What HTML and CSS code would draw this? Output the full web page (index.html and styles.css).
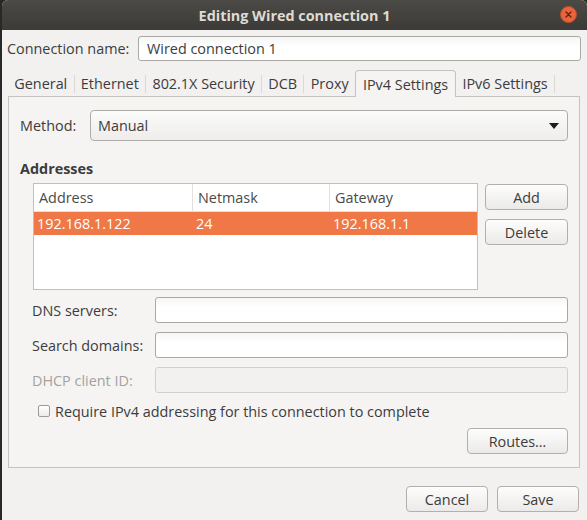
FILE: index.html
```html
<!DOCTYPE html>
<html>
<head>
<meta charset="utf-8">
<title>Editing Wired connection 1</title>
<link rel="stylesheet" href="styles.css">
</head>
<body>
<div class="window">
  <div class="titlebar">
    <span class="title">Editing Wired connection 1</span>
    <span class="close"><svg width="17" height="17" viewBox="0 0 17 17"><circle cx="8.5" cy="8.5" r="8" fill="#e9643a" stroke="#c24a22" stroke-width="1"/><path d="M6 6 L11 11 M11 6 L6 11" stroke="#5a2410" stroke-width="1.3" stroke-linecap="round"/></svg></span>
  </div>
  <div class="content">
    <div class="namerow">
      <span class="namelabel">Connection name:</span>
      <div class="entry nameentry">Wired connection 1</div>
    </div>
    <div class="tabs">
      <span class="tab">General</span><span class="tsep"></span>
      <span class="tab">Ethernet</span><span class="tsep"></span>
      <span class="tab">802.1X Security</span><span class="tsep"></span>
      <span class="tab">DCB</span><span class="tsep"></span>
      <span class="tab">Proxy</span>
      <span class="tab active">IPv4 Settings</span>
      <span class="tab">IPv6 Settings</span><span class="tsep"></span>
    </div>
    <div class="panel">
      <div class="methodrow">
        <span class="methodlabel">Method:</span>
        <div class="combo"><span>Manual</span><svg width="10" height="6" viewBox="0 0 10 6"><path d="M0 0 L10 0 L5 6 Z" fill="#1e1e1e"/></svg></div>
      </div>
      <div class="section-title">Addresses</div>
      <div class="addr">
        <div class="tree">
          <div class="thead">
            <div class="hc c1">Address</div>
            <div class="hc c2">Netmask</div>
            <div class="hc c3">Gateway</div>
          </div>
          <div class="trow selected">
            <div class="rc c1">192.168.1.122</div>
            <div class="rc c2">24</div>
            <div class="rc c3">192.168.1.1</div>
          </div>
        </div>
        <div class="addrbtns">
          <div class="button">Add</div>
          <div class="button">Delete</div>
        </div>
      </div>
      <div class="form">
        <span class="flabel">DNS servers:</span><div class="entry"></div>
        <span class="flabel">Search domains:</span><div class="entry"></div>
        <span class="flabel disabled">DHCP client ID:</span><div class="entry disabled"></div>
      </div>
      <div class="checkrow">
        <span class="checkbox"></span>
        <span>Require IPv4 addressing for this connection to complete</span>
      </div>
      <div class="routesrow">
        <div class="button routes">Routes…</div>
      </div>
    </div>
    <div class="footer">
      <div class="button fbtn">Cancel</div>
      <div class="button fbtn">Save</div>
    </div>
  </div>
</div>
</body>
</html>
```
FILE: styles.css
```css
* { box-sizing: border-box; }
html, body { margin: 0; padding: 0; }
body {
  background: #2a2826;
  font-family: "Open Sans", "Noto Sans", sans-serif;
  font-size: 14.4px;
  color: #3c3c3c;
  width: 587px;
  height: 520px;
  overflow: hidden;
}
.window {
  margin-left: 2px;
  width: 585px;
  height: 520px;
  background: #f2f1f0;
  border-radius: 6px 6px 0 0;
  overflow: hidden;
  display: flex;
  flex-direction: column;
}
.titlebar {
  height: 30px;
  flex: none;
  background: linear-gradient(#4b4a46, #3c3b37);
  display: flex;
  align-items: center;
  justify-content: center;
  position: relative;
}
.title {
  color: #dfdbd2;
  font-weight: bold;
  font-size: 14.4px;
}
.close {
  position: absolute;
  right: 10px;
  top: 6px;
  width: 17px;
  height: 17px;
  display: flex;
}
.content {
  padding: 6px 6px 0 5px;
  display: flex;
  flex-direction: column;
}
.namerow {
  display: flex;
  align-items: center;
  height: 25px;
}
.namelabel { width: 131px; flex: none; }
.entry {
  height: 26px;
  border: 1px solid #aaa8a3;
  border-radius: 3px;
  background: linear-gradient(#f6f6f6, #ffffff 40%);
  padding-left: 8px;
  display: flex;
  align-items: center;
}
.entry.disabled {
  border-color: #d3d0cb;
  background: #f2f1f0;
}
.nameentry { flex: 1; height: 25px; }
.tabs {
  margin-top: 9px;
  margin-left: 1px;
  height: 26px;
  display: flex;
  align-items: stretch;
}
.tab {
  padding: 0 6.3px;
  display: flex;
  align-items: center;
}
.tsep {
  width: 1px;
  background: #dcd9d4;
  margin: 5px 0 3px;
}
.tab.active {
  background: #f5f4f3;
  border: 1px solid #c6c3be;
  border-bottom: none;
  border-radius: 4px 4px 0 0;
  margin-bottom: -1px;
  position: relative;
  z-index: 1;
  padding: 0 7px;
}
.panel {
  margin: 0 1px;
  border: 1px solid #c6c3be;
  background: #f5f4f3;
  padding: 13px 11px 13px 11px;
  display: flex;
  flex-direction: column;
}
.methodrow {
  display: flex;
  align-items: center;
  height: 31px;
}
.methodlabel { width: 70px; flex: none; }
.combo {
  flex: 1;
  height: 31px;
  border: 1px solid #aeaca7;
  border-radius: 4px;
  background: linear-gradient(#fbfbfa, #eeedeb);
  display: flex;
  align-items: center;
  justify-content: space-between;
  padding: 0 8px 0 7px;
}
.section-title {
  font-weight: bold;
  margin-top: 18px;
  height: 19px;
  line-height: 19px;
}
.addr {
  margin-top: 5px;
  display: flex;
  padding-left: 13px;
}
.tree {
  width: 445px;
  height: 107px;
  border: 1px solid #c3c0bb;
  background: #ffffff;
}
.thead {
  display: flex;
  height: 28px;
  border-bottom: 1px solid #e2e1df;
}
.hc {
  display: flex;
  align-items: center;
  padding-left: 5px;
  color: #4a4a4a;
}
.hc.c1, .hc.c2 { border-right: 1px solid #e2e1df; }
.c1 { width: 159px; }
.c2 { width: 137px; }
.c3 { flex: 1; }
.trow {
  display: flex;
  height: 23px;
}
.trow.selected {
  background: #f07746;
  color: #ffffff;
}
.rc {
  display: flex;
  align-items: center;
  padding-left: 3px;
}
.addrbtns {
  margin-left: 7px;
  padding-top: 1px;
  display: flex;
  flex-direction: column;
  gap: 9px;
}
.button {
  height: 26px;
  border: 1px solid #b3b0aa;
  border-radius: 4px;
  background: linear-gradient(#fdfdfd, #ebeae8);
  display: flex;
  align-items: center;
  justify-content: center;
  color: #3c3c3c;
}
.addrbtns .button { width: 83px; }
.form {
  margin-top: 7px;
  padding-left: 12px;
  display: grid;
  grid-template-columns: 123px 1fr;
  row-gap: 9px;
  align-items: center;
}
.flabel.disabled { color: #a3a29e; }
.checkrow {
  margin-top: 9px;
  height: 18px;
  padding-left: 18px;
  display: flex;
  align-items: center;
  gap: 5px;
}
.checkbox {
  width: 12px;
  height: 12px;
  border: 1px solid #9d9b97;
  border-radius: 2px;
  background: linear-gradient(#ffffff, #ecebe9);
}
.routesrow {
  margin-top: 8px;
  display: flex;
  justify-content: flex-end;
}
.routes { width: 101px; }
.footer {
  margin-top: 18px;
  margin-right: 2px;
  display: flex;
  justify-content: flex-end;
  gap: 9px;
}
.fbtn { width: 82px; }
```
